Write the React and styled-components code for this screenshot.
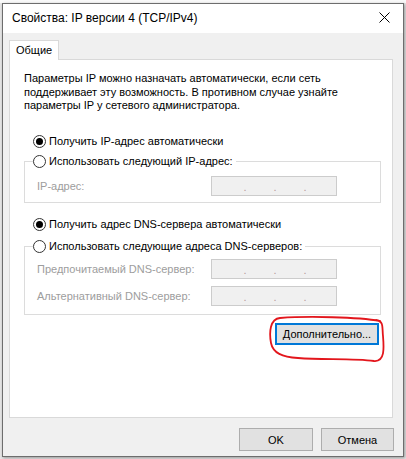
import React from 'react';
import styled, { createGlobalStyle } from 'styled-components';

const GlobalStyle = createGlobalStyle`
  html, body {
    margin: 0;
    padding: 0;
    background: #e8e8e8;
  }
  body {
    font-family: "Liberation Sans", Arial, sans-serif;
    font-size: 11px;
    color: #000;
  }
`;

const App = () => {
  return (
    <StyledScreen>
      <GlobalStyle />
      <StyledWindow>
        <StyledTitleBar>
          <StyledTitle>Свойства: IP версии 4 (TCP/IPv4)</StyledTitle>
          <StyledClose>
            <svg width="11" height="11" viewBox="0 0 11 11">
              <path d="M0.5 0.5 L10.5 10.5 M10.5 0.5 L0.5 10.5" stroke="#000" strokeWidth="1" />
            </svg>
          </StyledClose>
        </StyledTitleBar>

        <StyledBody>
          <StyledTab>Общие</StyledTab>
          <StyledPanel>
            <StyledDescription>
              Параметры IP можно назначать автоматически, если сеть
              <br />
              поддерживает эту возможность. В противном случае узнайте
              <br />
              параметры IP у сетевого администратора.
            </StyledDescription>

            <StyledRadioRow $top={21}>
              <StyledRadio $checked />
              Получить IP-адрес автоматически
            </StyledRadioRow>

            <StyledGroup $top={5} $bottom={6}>
              <StyledLegend>
                <StyledRadio />
                Использовать следующий IP-адрес:
              </StyledLegend>
              <StyledFieldRow $top={7}>
                <StyledLabel>IP-адрес:</StyledLabel>
                <IpField />
              </StyledFieldRow>
            </StyledGroup>

            <StyledRadioRow $top={14}>
              <StyledRadio $checked />
              Получить адрес DNS-сервера автоматически
            </StyledRadioRow>

            <StyledGroup $top={7} $bottom={8}>
              <StyledLegend>
                <StyledRadio />
                Использовать следующие адреса DNS-серверов:
              </StyledLegend>
              <StyledFieldRow $top={5}>
                <StyledLabel>Предпочитаемый DNS-сервер:</StyledLabel>
                <IpField />
              </StyledFieldRow>
              <StyledFieldRow $top={7}>
                <StyledLabel>Альтернативный DNS-сервер:</StyledLabel>
                <IpField />
              </StyledFieldRow>
            </StyledGroup>

            <StyledAdvancedRow>
              <StyledAdvancedWrap>
                <StyledAdvancedButton>Дополнительно...</StyledAdvancedButton>
                <StyledMarker width="118" height="47" viewBox="0 0 118 47">
                  <path
                    d="M112 5 C 90 1, 40 0, 12 2 C 2 3, 1 16, 3 27 C 5 37, 14 41, 30 42 C 55 44, 85 42, 106 45 C 117 46, 116 32, 115 20 C 114 11, 116 5, 108 4"
                    fill="none"
                    stroke="#e3161c"
                    strokeWidth="1.8"
                    strokeLinecap="round"
                  />
                </StyledMarker>
              </StyledAdvancedWrap>
            </StyledAdvancedRow>
          </StyledPanel>

          <StyledFooter>
            <StyledButton $width={74}>OK</StyledButton>
            <StyledButton $width={73}>Отмена</StyledButton>
          </StyledFooter>
        </StyledBody>
      </StyledWindow>
    </StyledScreen>
  );
};

const IpField = () => (
  <StyledIpField>
    <StyledDot>.</StyledDot>
    <StyledDot>.</StyledDot>
    <StyledDot>.</StyledDot>
  </StyledIpField>
);

const StyledScreen = styled.div`
  width: 406px;
  height: 459px;
  overflow: hidden;
  box-sizing: border-box;
  padding: 3px 0 0 2px;
  background: linear-gradient(to bottom, #fafafa 0, #fafafa 3px, #e6e6e6 3px);
`;

const StyledWindow = styled.div`
  width: 402px;
  height: 454px;
  box-sizing: border-box;
  border: 1px solid #6d6d6d;
  background: #f0f0f0;
  display: flex;
  flex-direction: column;
  box-shadow: 1px 1px 3px rgba(0, 0, 0, 0.35);
`;

const StyledTitleBar = styled.div`
  height: 29px;
  flex: none;
  background: #fff;
  display: flex;
  align-items: center;
  justify-content: space-between;
  padding: 0 13px 0 9px;
`;

const StyledTitle = styled.div`
  font-size: 12px;
  padding-bottom: 1px;
`;

const StyledClose = styled.div`
  width: 11px;
  height: 11px;
  display: flex;
  padding-bottom: 3px;
`;

const StyledBody = styled.div`
  flex: 1;
  display: flex;
  flex-direction: column;
  padding: 7px 9px 0 6px;
`;

const StyledTab = styled.div`
  align-self: flex-start;
  position: relative;
  z-index: 1;
  width: 50px;
  height: 20px;
  box-sizing: border-box;
  margin-bottom: -1px;
  padding: 3px 0 0 6px;
  background: #fff;
  border: 1px solid #d9d9d9;
  border-bottom: none;
`;

const StyledPanel = styled.div`
  width: 384px;
  height: 359px;
  box-sizing: border-box;
  background: #fff;
  border: 1px solid #d9d9d9;
  padding: 12px 0 0 14px;
  display: flex;
  flex-direction: column;
  align-items: flex-start;
`;

const StyledDescription = styled.div`
  line-height: 13.5px;
`;

const StyledRadioRow = styled.div`
  display: flex;
  align-items: center;
  height: 15px;
  margin: ${(p) => p.$top}px 0 0 9px;
`;

const StyledRadio = styled.span`
  width: 13px;
  height: 13px;
  box-sizing: border-box;
  border: 1px solid #333;
  border-radius: 50%;
  margin-right: 3px;
  display: flex;
  align-items: center;
  justify-content: center;
  background: #fff;

  &::after {
    content: '';
    width: 7px;
    height: 7px;
    border-radius: 50%;
    background: ${(p) => (p.$checked ? '#000' : 'transparent')};
  }
`;

const StyledGroup = styled.fieldset`
  width: 357px;
  box-sizing: border-box;
  margin: ${(p) => p.$top}px 0 0 0;
  padding: 0 0 ${(p) => p.$bottom}px 0;
  border: 1px solid #dcdcdc;
  min-inline-size: 0;
`;

const StyledLegend = styled.legend`
  display: flex;
  align-items: center;
  height: 15px;
  margin-left: 8px;
  padding: 0 3px 0 0;
  background: #fff;
`;

const StyledFieldRow = styled.div`
  display: flex;
  align-items: center;
  margin-top: ${(p) => p.$top}px;
  padding-left: 12px;
`;

const StyledLabel = styled.span`
  width: 174px;
  color: #9d9d9d;
`;

const StyledIpField = styled.div`
  width: 126px;
  height: 20px;
  box-sizing: border-box;
  background: #f0f0f0;
  border: 1px solid #cccccc;
  display: flex;
  gap: 26px;
  padding: 0 0 0 31px;
  align-items: flex-end;
`;

const StyledDot = styled.span`
  width: 4px;
  text-align: center;
  color: #b59a9a;
  font-size: 11px;
  line-height: 16px;
`;

const StyledAdvancedRow = styled.div`
  display: flex;
  justify-content: flex-end;
  width: 355px;
  margin-top: 8px;
`;

const StyledAdvancedWrap = styled.div`
  position: relative;
`;

const StyledAdvancedButton = styled.div`
  width: 104px;
  height: 22px;
  box-sizing: border-box;
  border: 2px solid #0078d7;
  background: #e1e1e1;
  display: flex;
  align-items: center;
  justify-content: center;
`;

const StyledMarker = styled.svg`
  position: absolute;
  left: -7px;
  top: -7px;
  pointer-events: none;
`;

const StyledFooter = styled.div`
  display: flex;
  justify-content: flex-end;
  gap: 8px;
  margin-top: 10px;
`;

const StyledButton = styled.div`
  width: ${(p) => p.$width}px;
  height: 23px;
  box-sizing: border-box;
  border: 1px solid #adadad;
  background: #e1e1e1;
  display: flex;
  align-items: center;
  justify-content: center;
`;

export default App;
